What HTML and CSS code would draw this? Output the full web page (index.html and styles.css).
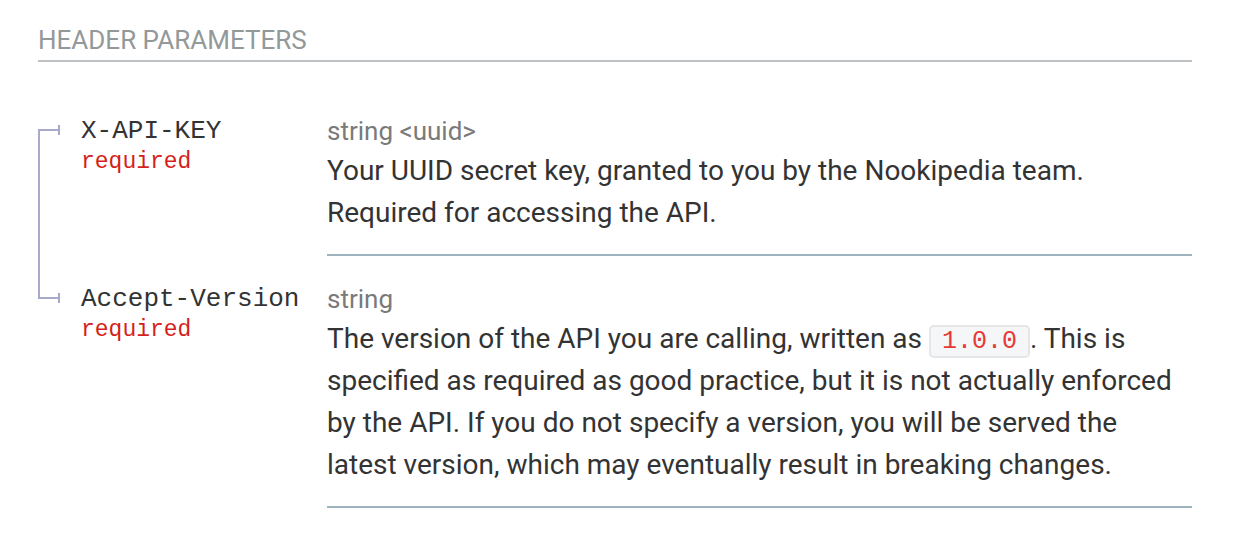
FILE: index.html
```html
<!DOCTYPE html>
<html>
<head>
<meta charset="utf-8">
<link rel="stylesheet" href="styles.css">
</head>
<body>
<div class="section">
  <h5 class="section-title">Header Parameters</h5>
  <div class="params">
    <div class="param first">
      <div class="param-name">
        <span class="name">X-API-KEY</span>
        <span class="required">required</span>
      </div>
      <div class="param-details">
        <div class="type">string &lt;uuid&gt;</div>
        <p class="desc">Your UUID secret key, granted to you by the Nookipedia team. Required for accessing the API.</p>
      </div>
    </div>
    <div class="param last">
      <div class="param-name">
        <span class="name">Accept-Version</span>
        <span class="required">required</span>
      </div>
      <div class="param-details">
        <div class="type">string</div>
        <p class="desc">The version of the API you are calling, written as <code>1.0.0</code>. This is specified as required as good practice, but it is not actually enforced by the API. If you do not specify a version, you will be served the latest version, which may eventually result in breaking changes.</p>
      </div>
    </div>
  </div>
</div>
</body>
</html>
```

FILE: styles.css
```css
html, body {
  margin: 0;
  padding: 0;
  background: #ffffff;
}

body {
  font-family: Roboto, "Liberation Sans", sans-serif;
  color: #333333;
}

.section {
  padding: 20px 48px 0 38px;
}

.section-title {
  margin: 0 0 26px 0;
  font-size: 26px;
  line-height: 40px;
  font-weight: 400;
  text-transform: uppercase;
  color: #939899;
  border-bottom: 2px solid #bec1c3;
}

.params {
  display: flex;
  flex-direction: column;
}

.param {
  display: flex;
}

.param-name {
  position: relative;
  box-sizing: border-box;
  width: 289px;
  flex: none;
  padding: 28px 0 0 43px;
  display: flex;
  flex-direction: column;
  background-image: linear-gradient(#a9a9cc, #a9a9cc);
  background-repeat: no-repeat;
  background-size: 2px 100%;
  background-position: 0 0;
}

.param.first .param-name {
  background-size: 2px calc(100% - 42px);
  background-position: 0 42px;
}

.param.last .param-name {
  background-size: 2px 43px;
  background-position: 0 0;
}

.param-name::before {
  content: "";
  position: absolute;
  left: 0;
  top: 41px;
  width: 22px;
  height: 2px;
  background: #a9a9cc;
}

.param-name::after {
  content: "";
  position: absolute;
  left: 20px;
  top: 37px;
  width: 2px;
  height: 10px;
  background: #a9a9cc;
}

.name {
  font-family: "Liberation Mono", "Courier New", monospace;
  font-size: 26px;
  line-height: 30px;
  color: #333333;
}

.required {
  font-family: "Liberation Mono", "Courier New", monospace;
  font-size: 23px;
  line-height: 32px;
  color: #d41f1c;
}

.param-details {
  flex: 1;
  padding: 28px 0 20px 0;
  border-bottom: 2px solid #9fb4be;
}

.type {
  font-size: 26px;
  line-height: 30px;
  color: #7a7a7a;
  margin-bottom: 4px;
}

.desc {
  margin: 0;
  font-size: 28px;
  line-height: 42px;
  color: #333333;
}

code {
  font-family: "Liberation Mono", "Courier New", monospace;
  font-size: 25px;
  line-height: 1;
  color: #e53935;
  background: #f5f6f7;
  border: 2px solid #e4e6e8;
  border-radius: 5px;
  padding: 0 11px;
}
```
